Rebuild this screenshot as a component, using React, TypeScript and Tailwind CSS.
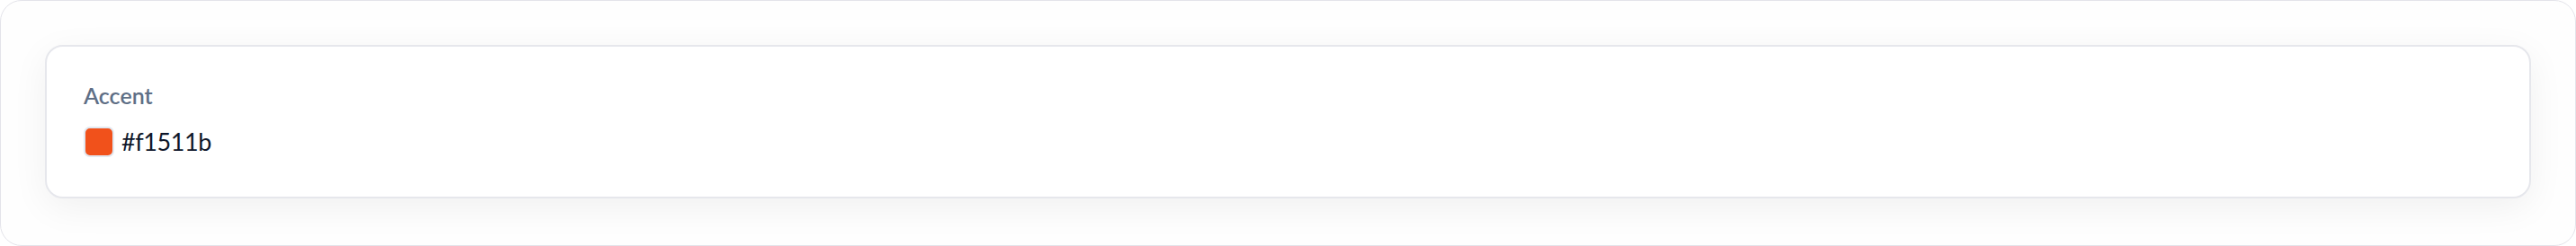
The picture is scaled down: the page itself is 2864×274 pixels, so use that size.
const App = () => {
  return (
    <div className="h-[274px] w-[2864px] bg-white font-['Lato',sans-serif]">
      <div className="h-full rounded-[24px] border border-[#e4e4ea] bg-[#fefefe] p-[49px]">
        <div className="flex h-[171px] flex-col rounded-[20px] border-2 border-[#e6e7ec] bg-white px-[41px] pt-[38px] shadow-[0_10px_40px_rgba(0,0,0,0.06)]">
          <div className="text-[25px] font-semibold leading-[32px] text-[#5f6f86]">Accent</div>
          <div className="mt-[18px] flex items-center gap-[8px]">
            <div className="h-[34px] w-[34px] rounded-[7px] border-2 border-[#e2e8f0] bg-[#f1511b]" />
            <span className="text-[27px] font-normal leading-[36px] tracking-[-0.4px] text-[#0f172a]">#f1511b</span>
          </div>
        </div>
      </div>
    </div>
  );
};

export default App;
